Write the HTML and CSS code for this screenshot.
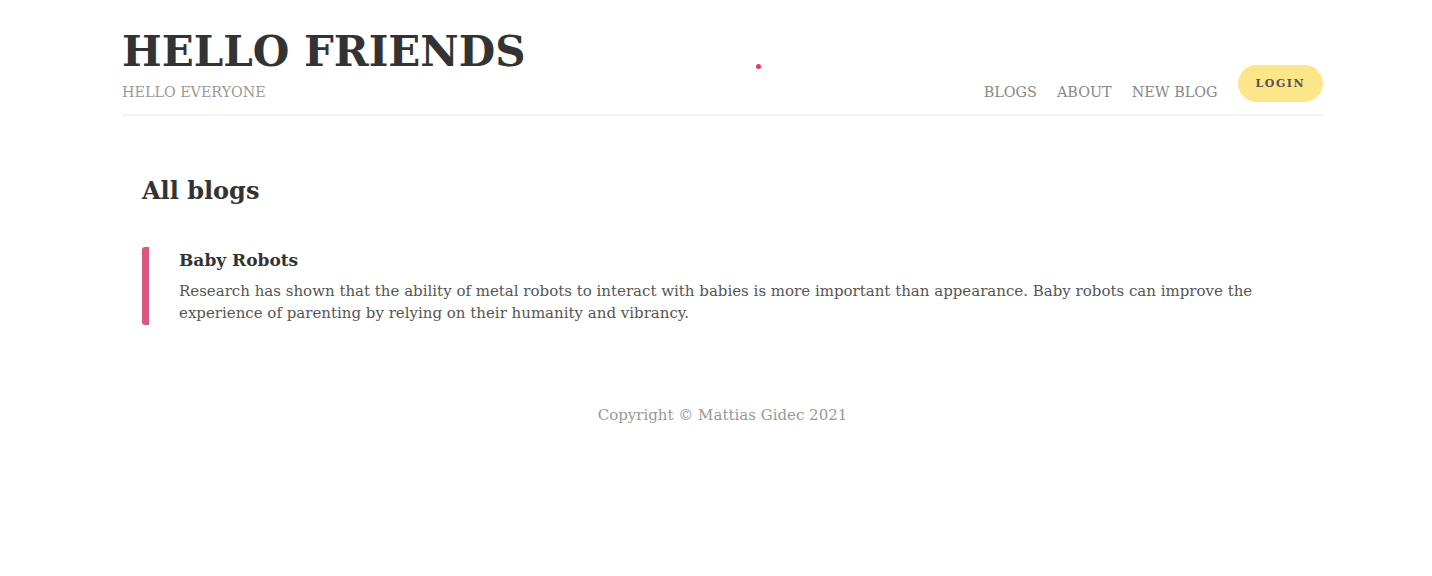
FILE: index.html
```html
<!DOCTYPE html>
<html>
<head>
<meta charset="utf-8">
<link rel="stylesheet" href="styles.css">
</head>
<body>
<div class="page">
  <header class="header">
    <div class="brand">
      <h1 class="title">HELLO FRIENDS</h1>
      <div class="subtitle">HELLO EVERYONE</div>
    </div>
    <span class="dot"></span>
    <nav class="nav">
      <a class="nav-link">BLOGS</a>
      <a class="nav-link">ABOUT</a>
      <a class="nav-link">NEW BLOG</a>
      <button class="login">LOGIN</button>
    </nav>
  </header>
  <main class="main">
    <h2 class="section-title">All blogs</h2>
    <article class="post">
      <h3 class="post-title">Baby Robots</h3>
      <p class="post-text">Research has shown that the ability of metal robots to interact with babies is more important than appearance. Baby robots can improve the experience of parenting by relying on their humanity and vibrancy.</p>
    </article>
  </main>
  <footer class="footer">Copyright © Mattias Gidec 2021</footer>
</div>
</body>
</html>
```
FILE: styles.css
```css
* { box-sizing: border-box; }
body {
  margin: 0;
  font-family: "DejaVu Serif", "Liberation Serif", serif;
  color: #333;
  background: #fff;
}
.page {
  width: 1201px;
  margin-left: 122px;
}
.header {
  position: relative;
  display: flex;
  justify-content: space-between;
  align-items: flex-end;
  padding-top: 25px;
  padding-bottom: 12px;
  border-bottom: 2px solid #f3f3f3;
}
.title {
  margin: 0 0 3px;
  font-size: 42px;
  line-height: 54px;
  font-weight: 700;
  color: #333;
}
.subtitle {
  font-size: 14.3px;
  color: #999;
  line-height: 20px;
}
.dot {
  position: absolute;
  left: 634px;
  top: 64px;
  width: 5px;
  height: 5px;
  border-radius: 50%;
  background: #e0404f;
}
.nav {
  display: flex;
  align-items: flex-end;
  gap: 20px;
}
.nav-link {
  font-size: 14.4px;
  color: #888;
  line-height: 20px;
}
.login {
  font-family: inherit;
  border: none;
  background: #fde68a;
  border-radius: 20px;
  height: 37px;
  padding: 0 18px;
  font-size: 11px;
  font-weight: 700;
  letter-spacing: 1.5px;
  color: #555;
  position: relative;
  top: -1px;
  margin-bottom: -1px;
}
.main {
  padding: 60px 20px 0;
}
.section-title {
  margin: 0 0 41px;
  font-size: 24px;
  line-height: 30px;
  color: #333;
}
.post {
  border-left: 7px solid #d9577a;
  border-radius: 3px;
  padding: 2px 0 1px 30px;
}
.post-title {
  margin: 0 0 9px;
  font-size: 17px;
  line-height: 22px;
}
.post-text {
  margin: 0;
  font-size: 15px;
  line-height: 22px;
  color: #555;
  max-width: 1076px;
}
.footer {
  text-align: center;
  font-size: 15px;
  line-height: 20px;
  color: #999;
  margin-top: 80px;
}
```
